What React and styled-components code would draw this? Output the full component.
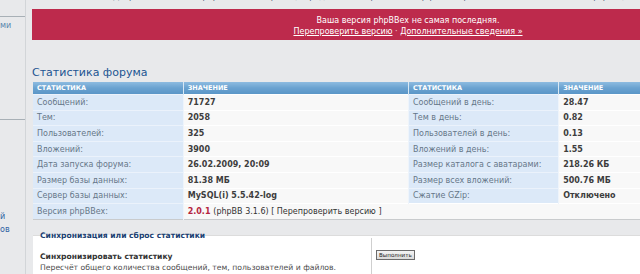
import React from "react";
import styled, { createGlobalStyle } from "styled-components";

const Global = createGlobalStyle`
  html, body { margin: 0; padding: 0; }
  body {
    background: #e8e9eb;
    font-family: "DejaVu Sans", Verdana, sans-serif;
    overflow: hidden;
    height: 274px;
  }
`;

const Page = styled.div`
  display: flex;
  align-items: stretch;
  width: 800px;
  min-height: 274px;
`;

const Sidebar = styled.div`
  width: 25px;
  flex-shrink: 0;
  border-right: 1px solid #d2d5d8;
  display: flex;
  flex-direction: column;
  overflow: hidden;
  & > * { flex-shrink: 0; }
`;

const SideBlock = styled.div`
  height: ${(p) => p.$h}px;
  border-bottom: ${(p) => (p.$line ? "1px solid #a8b0b6" : "none")};
`;

const SideLinks = styled.div`
  display: flex;
  flex-direction: column;
  padding-top: ${(p) => p.$pt || 0}px;
`;

const SideLink = styled.span`
  font-size: 8px;
  line-height: 13px;
  color: ${(p) => p.$c || "#2f62a3"};
  white-space: nowrap;
`;

const Main = styled.div`
  width: 752px;
  flex-shrink: 0;
  margin-left: 6px;
  display: flex;
  flex-direction: column;
  & > * { flex-shrink: 0; }
`;

const Intro = styled.p`
  margin: -9px 0 0 0;
  font-size: 8px;
  line-height: 12px;
  height: 12px;
  color: #4c5d77;
  text-align: center;
  white-space: nowrap;
`;

const Banner = styled.div`
  margin-top: 6px;
  height: 31px;
  box-sizing: border-box;
  padding-top: 2px;
  background: #bd2a4c;
  color: #fff;
  font-size: 8px;
  line-height: 11px;
  display: flex;
  flex-direction: column;
  align-items: center;
  justify-content: center;
`;

const BannerLinks = styled.div`
  color: #f3d6dd;
  a {
    color: #fff;
    text-decoration: underline;
  }
`;

const Heading = styled.h1`
  margin: 26px 0 0 0;
  font-family: "DejaVu Sans", sans-serif;
  font-weight: normal;
  font-size: 11px;
  line-height: 14px;
  color: #1c5592;
`;

const Table = styled.table`
  margin: 2px 0 0 1px;
  width: 751px;
  border-collapse: collapse;
  table-layout: fixed;
  border-bottom: 1px solid #c9cbcd;
`;

const Th = styled.th`
  height: 12px;
  padding: 0 0 0 4px;
  text-align: left;
  font-size: 6.5px;
  font-weight: bold;
  text-transform: uppercase;
  color: #fff;
  background: linear-gradient(#8dbbe0, #6aa2d0 50%, #5b96c7);
  border-left: 1px solid #d9e8f4;
  &:first-child { border-left: none; }
`;

const Td = styled.td`
  height: 14.6px;
  padding: 0 0 0 4px;
  font-size: 8px;
  white-space: nowrap;
  overflow: hidden;
  border-left: 1px solid #eef4fb;
  border-top: 1px solid ${(p) => (p.$label ? "#ebf2fb" : "#ffffff")};
  background: ${(p) => (p.$label ? "#dce9f8" : "#f8f8f8")};
  color: ${(p) => (p.$label ? "#667788" : "#3d3d3d")};
  font-weight: ${(p) => (p.$label ? "normal" : "bold")};
  &:first-child { border-left: none; }
`;

const Ver = styled.b`
  color: #b5253f;
`;

const Plain = styled.span`
  font-weight: normal;
  color: #333;
`;

const Fieldset = styled.fieldset`
  margin: 10px 0 0 1px;
  padding: 0 0 0 7px;
  border: none;
  border-top: 1px solid #dcdcdc;
  background: #ffffff;
  min-height: 60px;
`;

const Legend = styled.legend`
  padding: 0;
  margin-left: 0;
  font-size: 7.6px;
  font-weight: bold;
  color: #1a3f72;
  line-height: 11px;
`;

const Dl = styled.div`
  display: flex;
  margin-top: -3px;
`;

const Dt = styled.div`
  width: 331px;
  border-right: 1px solid #cfcfcf;
  padding-top: 13px;
  display: flex;
  flex-direction: column;
  min-height: 40px;
`;

const DtTitle = styled.span`
  font-size: 7.6px;
  font-weight: bold;
  color: #333;
  line-height: 11px;
`;

const DtDesc = styled.span`
  font-size: 7.7px;
  color: #4d4d4d;
  line-height: 11px;
`;

const Dd = styled.div`
  padding: 12px 0 0 4px;
`;

const Button = styled.button`
  display: block;
  font-family: "DejaVu Sans", sans-serif;
  font-size: 5.6px;
  height: 10px;
  padding: 0 2px;
  border: 1px solid #6b6b6b;
  background: linear-gradient(#f4f4f4, #dadada);
  color: #222;
  line-height: 8px;
`;

const left = [
  ["Сообщений:", "71727"],
  ["Тем:", "2058"],
  ["Пользователей:", "325"],
  ["Вложений:", "3900"],
  ["Дата запуска форума:", "26.02.2009, 20:09"],
  ["Размер базы данных:", "81.38 МБ"],
  ["Сервер базы данных:", "MySQL(i) 5.5.42-log"],
];
const right = [
  ["Сообщений в день:", "28.47"],
  ["Тем в день:", "0.82"],
  ["Пользователей в день:", "0.13"],
  ["Вложений в день:", "1.55"],
  ["Размер каталога с аватарами:", "218.26 КБ"],
  ["Размер всех вложений:", "500.76 МБ"],
  ["Сжатие GZip:", "Отключено"],
];

export default function App() {
  return (
    <>
      <Global />
      <Page>
        <Sidebar>
          <SideBlock $h={16} $line />
          <SideLinks $pt={2}>
            <SideLink $c="#5a86ad">ми</SideLink>
          </SideLinks>
          <SideBlock $h={87} $line />
          <SideLinks $pt={90}>
            <SideLink>й</SideLink>
            <SideLink>ов</SideLink>
          </SideLinks>
        </Sidebar>
        <Main>
          <Intro>
            Добро пожаловать в phpBBex! Эта страница представляет краткий обзор разнообразной статистики вашей конференции, группу ссылок.
          </Intro>
          <Banner>
            <div>Ваша версия phpBBex не самая последняя.</div>
            <BannerLinks>
              <a>Перепроверить версию</a> · <a>Дополнительные сведения »</a>
            </BannerLinks>
          </Banner>
          <Heading>Статистика форума</Heading>
          <Table>
            <colgroup>
              <col style={{ width: "20%" }} />
              <col style={{ width: "30%" }} />
              <col style={{ width: "20%" }} />
              <col style={{ width: "30%" }} />
            </colgroup>
            <thead>
              <tr>
                <Th>Статистика</Th>
                <Th>Значение</Th>
                <Th>Статистика</Th>
                <Th>Значение</Th>
              </tr>
            </thead>
            <tbody>
              {left.map((r, i) => (
                <tr key={i}>
                  <Td $label>{r[0]}</Td>
                  <Td>{r[1]}</Td>
                  <Td $label>{right[i][0]}</Td>
                  <Td>{right[i][1]}</Td>
                </tr>
              ))}
              <tr>
                <Td $label>Версия phpBBex:</Td>
                <Td colSpan={3}>
                  <Ver>2.0.1</Ver>{" "}
                  <Plain>(phpBB 3.1.6) [ Перепроверить версию ]</Plain>
                </Td>
              </tr>
            </tbody>
          </Table>
          <Fieldset>
            <Legend>Синхронизация или сброс статистики</Legend>
            <Dl>
              <Dt>
                <DtTitle>Синхронизировать статистику</DtTitle>
                <DtDesc>Пересчёт общего количества сообщений, тем, пользователей и файлов.</DtDesc>
              </Dt>
              <Dd>
                <Button>Выполнить</Button>
              </Dd>
            </Dl>
          </Fieldset>
        </Main>
      </Page>
    </>
  );
}
